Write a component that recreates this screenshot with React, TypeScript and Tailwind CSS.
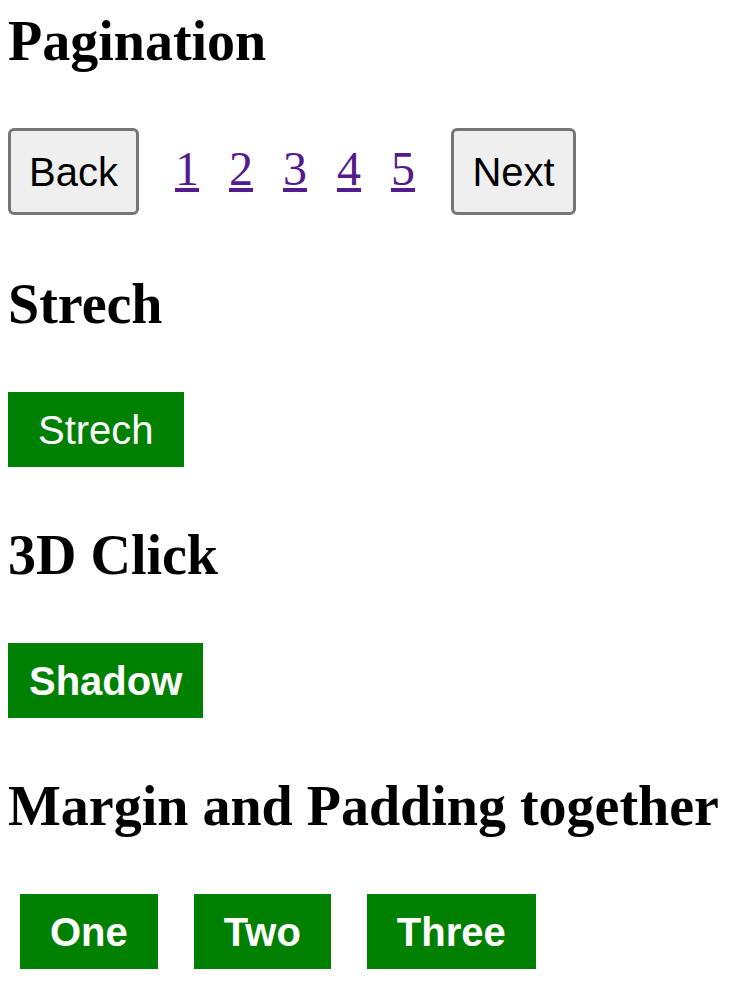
const heading = "font-['Liberation_Serif',serif] font-bold text-[56px] leading-[62px] text-black"
const greenBtn =
  "h-[75px] flex items-center justify-center bg-[#008000] text-white text-[40px] font-['Liberation_Sans',Arial,sans-serif]"
const grayBtn =
  "h-[87px] flex items-center justify-center border-[3px] border-[#767676] rounded-[6px] bg-[#efefef] text-black text-[40px] font-['Liberation_Sans',Arial,sans-serif]"

function Pagination() {
  const pages = [1, 2, 3, 4, 5]
  return (
    <div className="mt-[56px] flex items-start h-[87px]">
      <button className={`${grayBtn} w-[131px]`}>Back</button>
      {/* page links */}
      <div className="ml-[36px] mt-[14px] flex gap-[30px] font-['Liberation_Serif',serif] text-[48px] leading-[53px]">
        {pages.map((p) => (
          <a key={p} href="#" className="text-[#551a8b] underline">
            {p}
          </a>
        ))}
      </div>
      <button className={`${grayBtn} w-[125px] ml-[36px]`}>Next</button>
    </div>
  )
}

export default function App() {
  return (
    <div className="min-h-screen bg-white pl-[8px] pt-[10px]">
      <h1 className={heading}>Pagination</h1>
      <Pagination />

      <h1 className={`${heading} mt-[58px]`}>Strech</h1>
      <div className="mt-[57px] flex">
        <button className={`${greenBtn} px-[30px]`}>Strech</button>
      </div>

      <h1 className={`${heading} mt-[57px]`}>3D Click</h1>
      <div className="mt-[57px] flex">
        <button className={`${greenBtn} px-[21px] font-bold`}>Shadow</button>
      </div>

      <h1 className={`${heading} mt-[57px]`}>Margin and Padding together</h1>
      <div className="mt-[57px] ml-[12px] flex gap-[36px]">
        <button className={`${greenBtn} px-[30px] font-bold`}>One</button>
        <button className={`${greenBtn} px-[30px] font-bold`}>Two</button>
        <button className={`${greenBtn} px-[30px] font-bold`}>Three</button>
      </div>
    </div>
  )
}
